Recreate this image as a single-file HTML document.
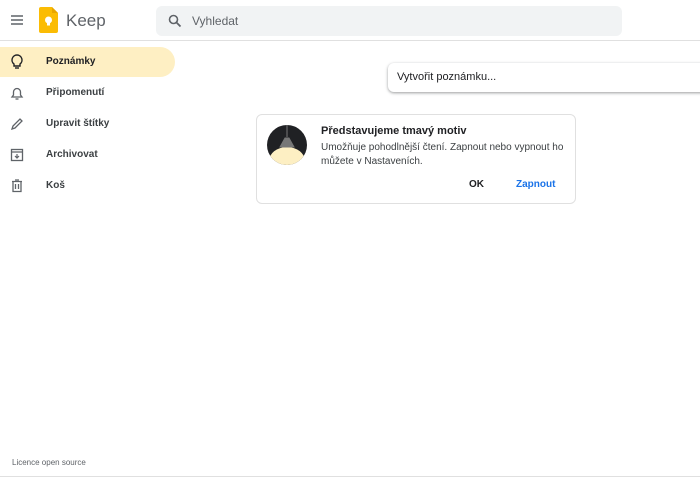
<!DOCTYPE html>
<html><head><meta charset="utf-8"><style>
*{margin:0;padding:0;box-sizing:border-box}
body{width:700px;height:479px;overflow:hidden;background:#fff;font-family:"Liberation Sans",sans-serif;color:#202124;position:relative}
.hdr{position:absolute;left:0;top:0;width:700px;height:41px;border-bottom:1px solid #e0e0e0}
.search{position:absolute;left:156px;top:6px;width:466px;height:30px;background:#f1f3f4;border-radius:6px}
.search span{position:absolute;left:36px;top:8px;font-size:12px;color:#5f6368}
.pill{position:absolute;left:0;top:47px;width:175px;height:30px;background:#feefc3;border-radius:0 15px 15px 0}
.item{position:absolute;left:46px;font-size:10px;font-weight:bold;color:#3c4043}
.ic{position:absolute;left:10px}
.note{position:absolute;left:388px;top:63px;width:320px;height:29px;border-radius:6px;box-shadow:0 1px 3px rgba(60,64,67,.35),0 1px 2px rgba(60,64,67,.2);background:#fff}
.note span{position:absolute;left:9px;top:8px;font-size:11px;color:#202124}
.card{position:absolute;left:256px;top:114px;width:320px;height:90px;border:1px solid #e0e0e0;border-radius:6px;background:#fff}
</style></head><body>
<div class="hdr">
<svg style="position:absolute;left:10px;top:14px" width="14" height="12"><path d="M1 2h12M1 6h12M1 10h12" stroke="#5f6368" stroke-width="1.5"/></svg>
<svg style="position:absolute;left:39px;top:7px" width="19" height="26"><path d="M2 0h11l6 6v18a2 2 0 0 1-2 2H2a2 2 0 0 1-2-2V2a2 2 0 0 1 2-2z" fill="#fbbc04"/><path d="M13 0v6h6z" fill="#e8a600"/><circle cx="9.5" cy="13" r="3.5" fill="#fff"/><rect x="8" y="16" width="3" height="2.5" fill="#fff"/></svg>
<div style="position:absolute;left:66px;top:11px;font-size:17px;color:#5f6368">Keep</div>
<div class="search"><svg style="position:absolute;left:12px;top:8px" width="14" height="14"><circle cx="5.5" cy="5.5" r="4" fill="none" stroke="#5f6368" stroke-width="1.6"/><path d="M8.5 8.5l4 4" stroke="#5f6368" stroke-width="1.8"/></svg><span>Vyhledat</span></div>
</div>
<div class="pill"></div>
<svg class="ic" style="top:54px" width="14" height="16"><path d="M7 1a5 5 0 0 0-3 9v2h6v-2a5 5 0 0 0-3-9z" fill="none" stroke="#202124" stroke-width="1.4"/><path d="M5 14h4" stroke="#202124" stroke-width="1.4"/></svg>
<div class="item" style="top:56px;color:#202124">Poznámky</div>
<svg class="ic" style="top:86px" width="14" height="15"><path d="M2 11h10l-1.5-2V6a3.5 3.5 0 0 0-7 0v3z" fill="none" stroke="#5f6368" stroke-width="1.3"/><path d="M5.5 13h3" stroke="#5f6368" stroke-width="1.3"/></svg>
<div class="item" style="top:87px">Připomenutí</div>
<svg class="ic" style="top:117px" width="14" height="14"><path d="M2 12l1-3 7-7 2 2-7 7z" fill="none" stroke="#5f6368" stroke-width="1.3"/></svg>
<div class="item" style="top:118px">Upravit štítky</div>
<svg class="ic" style="top:148px" width="14" height="14"><rect x="1.5" y="1.5" width="11" height="11" fill="none" stroke="#5f6368" stroke-width="1.3"/><path d="M1.5 4h11M7 6v4M5 8l2 2 2-2" stroke="#5f6368" stroke-width="1.2" fill="none"/></svg>
<div class="item" style="top:149px">Archivovat</div>
<svg class="ic" style="top:179px" width="14" height="14"><path d="M2 2.5h10M5 1h4M3 2.5v10h8v-10M5.5 5v5M8.5 5v5" stroke="#5f6368" stroke-width="1.3" fill="none"/></svg>
<div class="item" style="top:180px">Koš</div>
<div class="note"><span>Vytvořit poznámku...</span></div>
<div class="card">
<svg style="position:absolute;left:10px;top:10px" width="40" height="40"><defs><clipPath id="c"><circle cx="20" cy="20" r="20"/></clipPath></defs><circle cx="20" cy="20" r="20" fill="#202124"/><g clip-path="url(#c)"><ellipse cx="20" cy="36" rx="18" ry="14" fill="#fdefc3"/><path d="M20 0v12M13 22l5-9h4l5 9z" stroke="#777" fill="#777"/></g></svg>
<div style="position:absolute;left:64px;top:10px;font-size:11px;font-weight:bold;color:#202124">Představujeme tmavý motiv</div>
<div style="position:absolute;left:64px;top:26px;font-size:10px;line-height:13.5px;color:#3c4043;width:250px">Umožňuje pohodlnější čtení. Zapnout nebo vypnout ho můžete v Nastaveních.</div>
<div style="position:absolute;left:212px;top:64px;font-size:10px;font-weight:bold;color:#202124">OK</div>
<div style="position:absolute;left:259px;top:64px;font-size:10px;font-weight:bold;color:#1a73e8">Zapnout</div>
</div>
<div style="position:absolute;left:12px;top:458px;font-size:8px;color:#5f6368">Licence open source</div>
<div style="position:absolute;left:0;top:476px;width:700px;height:1px;background:#e0e0e0"></div>
</body></html>
